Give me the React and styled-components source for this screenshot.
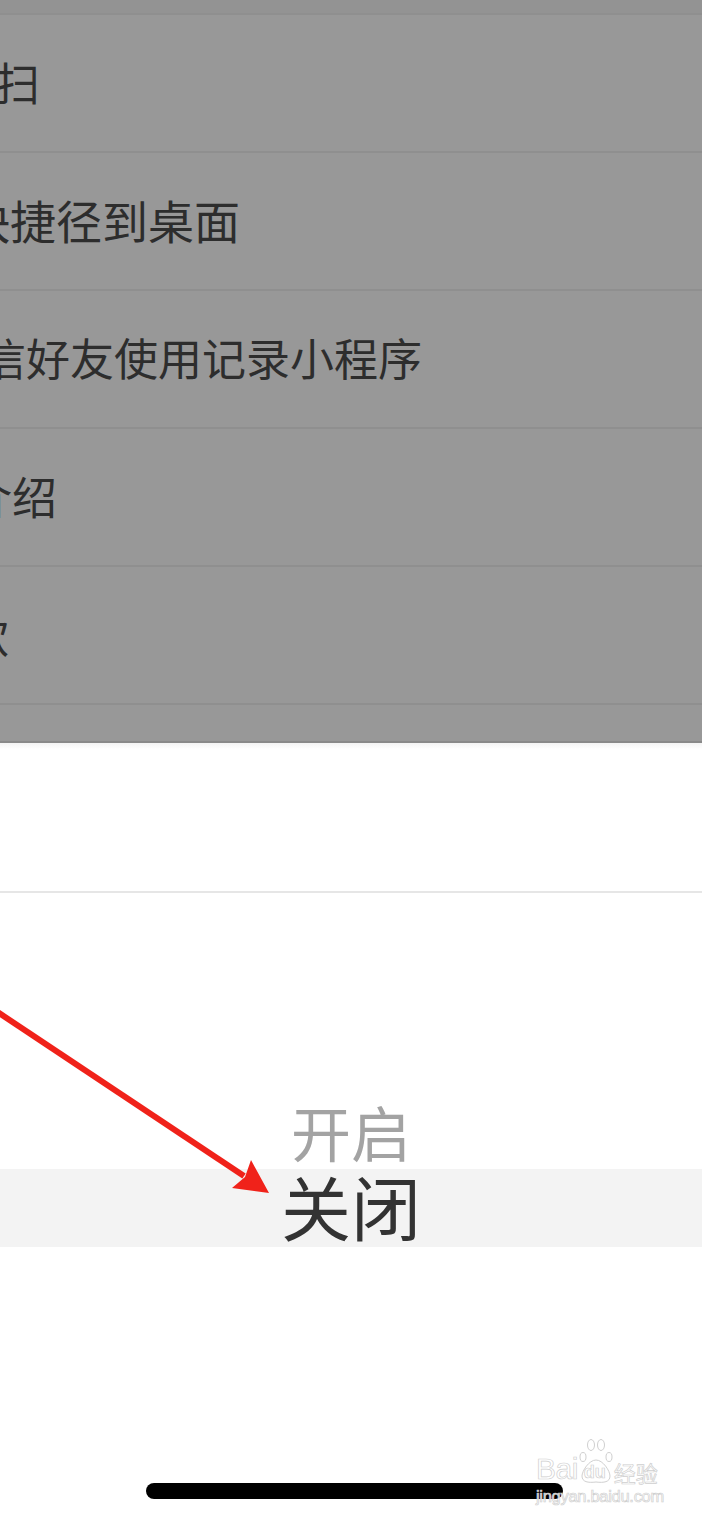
import React from 'react'
import styled, { createGlobalStyle } from 'styled-components'

const GlobalStyle = createGlobalStyle`
  html, body {
    margin: 0;
    padding: 0;
    background: #fff;
  }
  body {
    font-family: "Noto Sans CJK SC", "Noto Sans", sans-serif;
  }
`

const Page = styled.div`
  position: relative;
  width: 702px;
  height: 1519px;
  overflow: hidden;
  background: #fff;
  display: flex;
  flex-direction: column;
`

const Dimmed = styled.div`
  background: #989898;
  display: flex;
  flex-direction: column;
  height: 743px;
  flex-shrink: 0;
`

const TopStrip = styled.div`
  height: 13px;
  background: #939393;
`

const MenuRow = styled.div`
  height: ${({ h }) => h || 136}px;
  border-top: 2px solid #8f8f8f;
  display: flex;
  align-items: center;
  overflow: hidden;
  flex-shrink: 0;
`

const MenuText = styled.span`
  margin-left: ${({ shift }) => shift}px;
  margin-top: -4px;
  font-size: ${({ size }) => size || 45}px;
  line-height: 1;
  color: #2d2d2d;
  white-space: nowrap;
`

const DimmedBottom = styled.div`
  height: 2px;
  background: #8a8a8a;
`

const Sheet = styled.div`
  height: 148px;
  flex-shrink: 0;
  background: linear-gradient(#f4f4f4, #fff 6px);
  border-bottom: 2px solid #e6e6e6;
`

const Picker = styled.div`
  flex: 1;
  display: flex;
  flex-direction: column;
  padding-top: 205px;
`

const Option = styled.div`
  height: ${({ selected }) => (selected ? 78 : 71)}px;
  display: flex;
  align-items: center;
  justify-content: center;
  background: ${({ selected }) => (selected ? '#f3f3f3' : 'transparent')};
  color: ${({ selected }) => (selected ? '#333' : '#a3a3a3')};
  font-size: ${({ selected }) => (selected ? 70 : 60)}px;
  line-height: 1;
  padding-bottom: ${({ selected }) => (selected ? 4 : 6)}px;
  box-sizing: border-box;
`

const HomeArea = styled.div`
  margin-top: auto;
  padding: 0 0 20px 146px;
`

const HomeBar = styled.div`
  width: 417px;
  height: 16px;
  border-radius: 8px;
  background: #000;
`

const Arrow = styled.svg`
  position: absolute;
  left: 0;
  top: 1000px;
  width: 280px;
  height: 210px;
`

const Watermark = styled.div`
  position: absolute;
  left: 536px;
  top: 1436px;
  display: flex;
  flex-direction: column;
  align-items: flex-start;
  color: rgba(255, 255, 255, 0.85);
  -webkit-text-stroke: 0.7px #cfcfcf;
  font-family: "Liberation Sans", "Noto Sans CJK SC", sans-serif;
`

const MarkTop = styled.div`
  display: flex;
  align-items: flex-end;
  height: 48px;
`

const MarkBig = styled.span`
  font-size: 30px;
  line-height: 1;
  letter-spacing: -0.5px;
`

const Paw = styled.div`
  position: relative;
  width: 34px;
  height: 46px;
  margin: 0 1px;
`

const PawText = styled.span`
  position: absolute;
  left: 5px;
  bottom: 3px;
  font-size: 18px;
  line-height: 1;
  font-weight: bold;
`

const MarkCn = styled.span`
  font-family: "Noto Sans CJK SC", sans-serif;
  font-size: 22px;
  line-height: 1;
  margin-bottom: 1px;
`

const MarkUrl = styled.span`
  font-size: 16.5px;
  line-height: 1;
  margin-top: 4px;
  letter-spacing: -0.3px;
`

const rows = [
  { text: '扫', shift: -5 },
  { text: '快捷径到桌面', shift: -36, size: 46 },
  { text: '信好友使用记录小程序', shift: -18, size: 44 },
  { text: '介绍', shift: -33 },
  { text: '款', shift: -36 },
]

export default function App() {
  return (
    <>
      <GlobalStyle />
      <Page>
        <Dimmed>
          <TopStrip />
          {rows.map((r, i) => (
            <MenuRow key={i}>
              <MenuText shift={r.shift} size={r.size}>{r.text}</MenuText>
            </MenuRow>
          ))}
          <MenuRow h={36} />
          <DimmedBottom />
        </Dimmed>

        <Sheet />

        <Picker>
          <Option>开启</Option>
          <Option selected>关闭</Option>
          <HomeArea>
            <HomeBar />
          </HomeArea>
        </Picker>

        <Arrow viewBox="0 1000 280 210">
          <line x1="-4" y1="1011" x2="244" y2="1176" stroke="#f0221a" strokeWidth="6" />
          <polygon points="269,1193 232,1188 245,1177 251,1160" fill="#f0221a" />
        </Arrow>

        <Watermark>
          <MarkTop>
            <MarkBig>Bai</MarkBig>
            <Paw>
              <svg width="34" height="46" viewBox="0 0 34 46">
                <g fill="none" stroke="#d0d0d0" strokeWidth="1">
                  <ellipse cx="4" cy="19" rx="3" ry="4.5" />
                  <ellipse cx="12" cy="7" rx="3.5" ry="5.5" />
                  <ellipse cx="22" cy="7" rx="3.5" ry="5.5" />
                  <ellipse cx="30" cy="19" rx="3" ry="4.5" />
                  <path d="M17 22 C10 22 3 33 3 38 C3 44 9 45 17 44 C25 45 31 44 31 38 C31 33 24 22 17 22 Z" />
                </g>
              </svg>
              <PawText>du</PawText>
            </Paw>
            <MarkCn>经验</MarkCn>
          </MarkTop>
          <MarkUrl>jingyan.baidu.com</MarkUrl>
        </Watermark>
      </Page>
    </>
  )
}
